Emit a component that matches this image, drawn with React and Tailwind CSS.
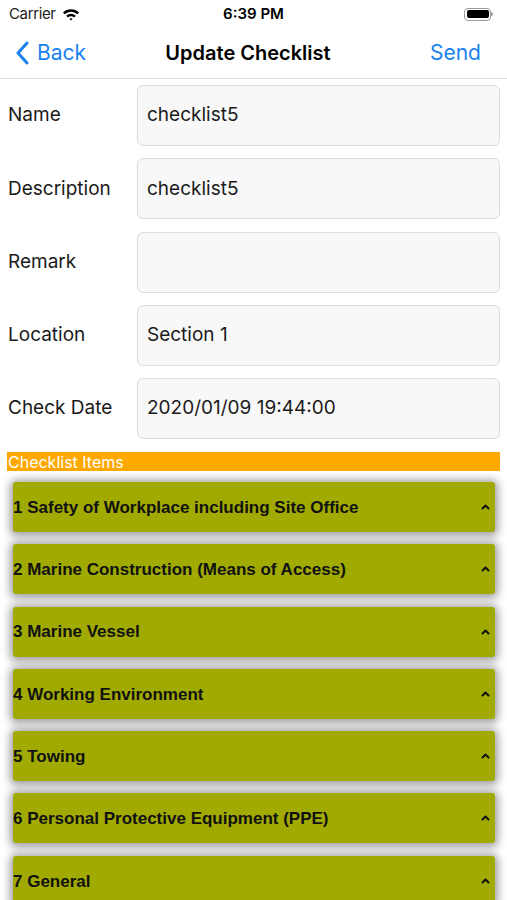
import React from 'react'

const fields = [
  { label: 'Name', value: 'checklist5' },
  { label: 'Description', value: 'checklist5' },
  { label: 'Remark', value: '' },
  { label: 'Location', value: 'Section 1' },
  { label: 'Check Date', value: '2020/01/09 19:44:00' },
]

const items = [
  '1 Safety of Workplace including Site Office',
  '2 Marine Construction (Means of Access)',
  '3 Marine Vessel',
  '4 Working Environment',
  '5 Towing',
  '6 Personal Protective Equipment (PPE)',
  '7 General',
]

const App = () => {
  return (
    <div className="w-[507px] h-[900px] overflow-hidden bg-white font-['Inter','Liberation_Sans',sans-serif]">
      {/* status bar */}
      <div className="h-[28px] flex items-center justify-between px-[9px] text-[15px] text-black">
        <div className="flex items-center gap-[6px] w-[120px]">
          <span className="text-[15px] tracking-tight text-[#222]">Carrier</span>
          <svg width="18" height="13" viewBox="0 0 18 13">
            <path d="M1 4.6 A11.5 11.5 0 0 1 17 4.6 L15.3 6.3 A9 9 0 0 0 2.7 6.3 Z" fill="#000" />
            <path d="M4.2 7.8 A6.8 6.8 0 0 1 13.8 7.8 L12.1 9.5 A4.4 4.4 0 0 0 5.9 9.5 Z" fill="#000" />
            <path d="M7.4 11 A2.3 2.3 0 0 1 10.6 11 L9 12.6 Z" fill="#000" />
          </svg>
        </div>
        <span className="font-semibold text-[15px]">6:39 PM</span>
        <div className="w-[120px] flex justify-end pr-[5px]">
          <div className="flex items-center">
            <div className="w-[27px] h-[13px] rounded-[4px] border border-[#9a9a9a] p-[1.5px]">
              <div className="w-full h-full rounded-[2px] bg-black" />
            </div>
            <div className="w-[2px] h-[4px] bg-[#9a9a9a] rounded-r-sm" />
          </div>
        </div>
      </div>

      {/* nav bar */}
      <div className="h-[51px] border-b border-[#e2e2e2] flex items-center justify-between pl-[15px] pr-[26px]">
        <div className="flex items-center gap-[8px] text-[#1a82f0] w-[120px]">
          <svg width="14" height="24" viewBox="0 0 14 24">
            <polyline points="12,2 3,12 12,22" fill="none" stroke="#1a82f0" strokeWidth="3" strokeLinecap="round" strokeLinejoin="round" />
          </svg>
          <span className="text-[21px]">Back</span>
        </div>
        <span className="text-[20px] font-semibold text-black">Update Checklist</span>
        <span className="w-[120px] text-right text-[21px] text-[#1a82f0]">Send</span>
      </div>

      {/* form */}
      <div className="flex flex-col gap-[12.25px] pt-[6px] pl-[8px] pr-[7px]">
        {fields.map((f) => (
          <div key={f.label} className="flex items-center h-[61px]">
            <span className="w-[129px] text-[19px] text-[#1a1a1a]">{f.label}</span>
            <div className="flex-1 h-full rounded-[6px] border border-[#dcdcdc] bg-[#f8f8f8] flex items-center px-[9px] text-[19px] text-[#1a1a1a]">
              {f.value}
            </div>
          </div>
        ))}
      </div>

      {/* checklist items */}
      <div className="mt-[13px] mx-[7px] h-[19px] bg-[#ffa800] flex items-center px-[1px] text-[16px] text-white leading-none">
        Checklist Items
      </div>

      <div className="flex flex-col gap-[12.3px] mt-[11px] pl-[13px] pr-[12px]">
        {items.map((t) => (
          <div
            key={t}
            className="h-[50px] shrink-0 rounded-[3px] bg-[#a0aa00] shadow-[0_1px_8px_3px_rgba(0,0,0,0.38)] flex items-center justify-between pl-0 pr-[5px]"
          >
            <span className="font-['Liberation_Sans',Arial,sans-serif] font-bold text-[17px] text-[#111] pt-[1px]">{t}</span>
            <svg width="9" height="6" viewBox="0 0 9 6">
              <polyline points="1.5,4.5 4.5,1.5 7.5,4.5" fill="none" stroke="#111" strokeWidth="2" strokeLinecap="round" strokeLinejoin="round" />
            </svg>
          </div>
        ))}
      </div>
    </div>
  )
}

export default App
